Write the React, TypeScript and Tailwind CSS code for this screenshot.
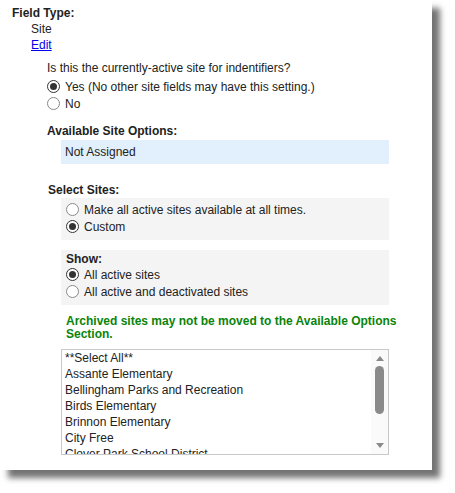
const sites = [
  '**Select All**',
  'Assante Elementary',
  'Bellingham Parks and Recreation',
  'Birds Elementary',
  'Brinnon Elementary',
  'City Free',
  'Clover Park School District',
]

function Radio({ checked }: { checked?: boolean }) {
  return (
    <span
      className={`w-[13px] h-[13px] rounded-full bg-white flex items-center justify-center shrink-0 ${
        checked ? 'border border-[#333]' : 'border border-[#8a8a8a]'
      }`}
    >
      {checked && <span className="w-[7px] h-[7px] rounded-full bg-[#333]" />}
    </span>
  )
}

function RadioRow({ label, checked }: { label: string; checked?: boolean }) {
  return (
    <div className="flex items-center gap-[5px] h-[17px]">
      <Radio checked={checked} />
      <span>{label}</span>
    </div>
  )
}

export default function App() {
  return (
    <div className="w-[455px] h-[493px] bg-white">
      <div className="w-[432px] h-[470px] bg-white shadow-[8px_8px_6px_rgba(0,0,0,0.55)] overflow-hidden font-['Liberation_Sans',Arial,sans-serif] text-[12px] text-[#222] leading-[16px] pt-[5px] pl-[12px]">
        <div className="font-bold h-[16px]">Field Type:</div>
        <div className="pl-[19px]">
          <div className="h-[16px]">Site</div>
          <a href="#" className="block h-[16px] text-[#0000ee] underline w-fit">
            Edit
          </a>
        </div>

        <div className="pl-[35px]">
          <div className="h-[16px] mt-[7px]">Is this the currently-active site for indentifiers?</div>
          <div className="mt-[2px]">
            <RadioRow label="Yes (No other site fields may have this setting.)" checked />
            <RadioRow label="No" />
          </div>

          <div className="font-bold h-[16px] mt-[11px]">Available Site Options:</div>
          <div className="ml-[14px] w-[328px] h-[24px] leading-[24px] mt-[1px] bg-[#e1f0fc] px-[4px]">
            Not Assigned
          </div>

          <div className="font-bold h-[16px] mt-[18px] pl-[1px]">Select Sites:</div>
          <div className="ml-[14px] w-[328px] bg-[#f4f4f4] pt-[3px] pb-[5px] pl-[5px]">
            <RadioRow label="Make all active sites available at all times." />
            <RadioRow label="Custom" checked />
          </div>

          <div className="ml-[14px] w-[328px] mt-[10px] bg-[#f4f4f4] pt-[2px] pb-[5px] pl-[5px]">
            <div className="font-bold h-[14px] leading-[14px]">Show:</div>
            <RadioRow label="All active sites" checked />
            <RadioRow label="All active and deactivated sites" />
          </div>

          <div className="ml-[19px] mt-[10px] font-bold text-[#0a840a] leading-[13px]">
            Archived sites may not be moved to the Available Options
            <br />
            Section.
          </div>

          <div className="ml-[14px] mt-[8px] w-[328px] h-[106px] border border-[#c8c8c8] flex overflow-hidden">
            <div className="flex-1 pl-[3px] overflow-hidden">
              {sites.map((s) => (
                <div key={s} className="h-[16px] leading-[16px] whitespace-nowrap">
                  {s}
                </div>
              ))}
            </div>
            <div className="w-[17px] bg-[#fafafa] flex flex-col items-center pt-[6px] pb-[6px]">
              <span className="w-0 h-0 border-l-[4px] border-r-[4px] border-b-[5px] border-l-transparent border-r-transparent border-b-[#8a8a8a]" />
              <span className="w-[9px] h-[48px] mt-[5px] rounded-full bg-[#8a8a8a]" />
              <span className="flex-1" />
              <span className="w-0 h-0 border-l-[4px] border-r-[4px] border-t-[5px] border-l-transparent border-r-transparent border-t-[#8a8a8a]" />
            </div>
          </div>
        </div>
      </div>
    </div>
  )
}
